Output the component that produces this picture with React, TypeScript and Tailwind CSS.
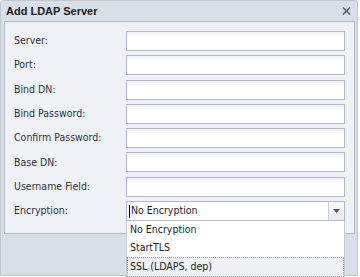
const font = "font-['DejaVu_Sans_Condensed','Liberation_Sans',sans-serif]";

const fields = [
  'Server:',
  'Port:',
  'Bind DN:',
  'Bind Password:',
  'Confirm Password:',
  'Base DN:',
  'Username Field:',
];

const options = ['No Encryption', 'StartTLS', 'SSL (LDAPS, dep)'];

function TextInput() {
  return (
    <div className="h-[20px] w-[219px] border border-[#b5b7c9] bg-white bg-gradient-to-b from-[#eef0f3] to-white to-[5px]" />
  );
}

export default function App() {
  return (
    <div className={`relative w-[360px] h-[277px] bg-white text-[10.5px] text-[#222] ${font}`}>
      <div className="w-[358px] h-[276px] border border-[#bfc7d1] rounded-t-[3px] bg-[#d9dfe7] flex flex-col">
        <div className="h-[20px] flex items-center justify-between pl-[5px] pr-[5px]">
          <span className="font-bold text-[11px] text-[#1c1c1c] font-['Liberation_Sans',sans-serif]">
            Add LDAP Server
          </span>
          <svg width="9" height="8" viewBox="0 0 9 8" className="mr-[1px]">
            <path d="M1 0.5 L8 7.5 M8 0.5 L1 7.5" stroke="#5a5f66" strokeWidth="1.6" />
          </svg>
        </div>
        <div className="ml-[3px] w-[351px] h-[213px] border border-[#aeb7c3] bg-[#eef1f5] pt-[9px] px-[9px] flex flex-col gap-[4.3px]">
          {fields.map((f) => (
            <div key={f} className="flex items-center">
              <span className="w-[112px] text-[#333]">{f}</span>
              <TextInput />
            </div>
          ))}
          <div className="flex items-center">
            <span className="w-[112px] text-[#333]">Encryption:</span>
            <div className="h-[20px] w-[219px] border border-[#b5b7c9] bg-white flex">
              <div className="flex-1 flex items-center pl-[2px]">
                <span className="w-px h-[13px] bg-black mr-[1px]" />
                <span>No Encryption</span>
              </div>
              <div className="w-[16px] border-l border-[#c9ccd6] bg-gradient-to-b from-[#f8f9fa] to-[#e9ecf0] flex items-center justify-center">
                <svg width="7" height="4" viewBox="0 0 7 4">
                  <path d="M0 0 H7 L3.5 4 Z" fill="#555" />
                </svg>
              </div>
            </div>
          </div>
        </div>
      </div>

      <div className="absolute left-[126px] top-[221px] w-[219px] h-[56px] bg-white border-x border-[#c4c8d3] flex flex-col">
        {options.map((o, i) => (
          <div
            key={o}
            className={
              i === 2
                ? 'h-[20px] flex items-center pl-[2px] bg-[#eef0f4] border border-dotted border-[#9aa3b5]'
                : 'h-[18px] flex items-center pl-[3px]'
            }
          >
            {o}
          </div>
        ))}
      </div>
    </div>
  );
}
